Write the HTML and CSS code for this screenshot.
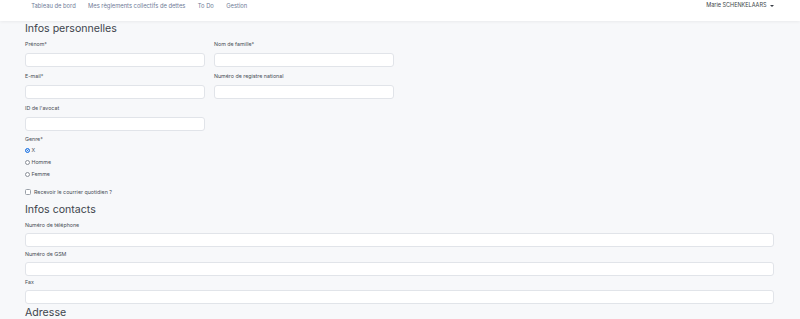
FILE: index.html
```html
<!DOCTYPE html>
<html lang="fr">
<head>
    <meta charset="UTF-8">
    <meta name="viewport" content="width=device-width, initial-scale=1.0">
    <title>Profil</title>
    <link rel="stylesheet" href="styles.css">
</head>
<body>
    <div class="navbar">
        <div class="nav-links">
            <a href="#">Tableau de bord</a>
            <a href="#">Mes règlements collectifs de dettes</a>
            <a href="#">To Do</a>
            <a href="#">Gestion</a>
        </div>
        <div class="user-menu">Marie SCHENKELAARS <span class="caret"></span></div>
    </div>

    <div class="content">
        <h2>Infos personnelles</h2>
        <div class="form-grid">
            <div class="field">
                <label>Prénom*</label>
                <input type="text">
            </div>
            <div class="field">
                <label>Nom de famille*</label>
                <input type="text">
            </div>
            <div class="field">
                <label>E-mail*</label>
                <input type="text">
            </div>
            <div class="field">
                <label>Numéro de registre national</label>
                <input type="text">
            </div>
            <div class="field">
                <label>ID de l'avocat</label>
                <input type="text">
            </div>
        </div>

        <div class="genre">
            <label>Genre*</label>
            <div class="radio"><input type="radio" name="genre" checked> X</div>
            <div class="radio"><input type="radio" name="genre"> Homme</div>
            <div class="radio"><input type="radio" name="genre"> Femme</div>
        </div>

        <div class="check">
            <input type="checkbox"> Recevoir le courrier quotidien ?
        </div>

        <h2>Infos contacts</h2>
        <div class="field wide first">
            <label>Numéro de téléphone</label>
            <input type="text">
        </div>
        <div class="field wide">
            <label>Numéro de GSM</label>
            <input type="text">
        </div>
        <div class="field wide">
            <label>Fax</label>
            <input type="text">
        </div>

        <h2 class="last">Adresse</h2>
    </div>
</body>
</html>
```

FILE: styles.css
```css
body {
    font-family: Inter, "Noto Sans", sans-serif;
    margin: 0;
    background-color: #f7f8fa;
    color: #484d55;
}

.navbar {
    display: flex;
    justify-content: space-between;
    height: 21px;
    background-color: #fff;
    box-shadow: 0 1px 3px rgba(0, 0, 0, 0.06);
    padding: 0 25px;
}

.nav-links {
    display: flex;
    height: 11px;
    align-items: center;
}

.nav-links a {
    font-size: 5.8px;
    color: #6f7b97;
    text-decoration: none;
    padding: 0 6.2px;
}

.user-menu {
    font-size: 5.5px;
    color: #3a3f47;
    height: 10px;
    line-height: 10px;
    padding-right: 1px;
}

.caret {
    display: inline-block;
    width: 0;
    height: 0;
    border-left: 2px solid transparent;
    border-right: 2px solid transparent;
    border-top: 2px solid #3a3f47;
    vertical-align: middle;
    margin-left: 2px;
}

.content {
    padding: 0 26px 0 25px;
}

h2 {
    font-size: 10.6px;
    font-weight: 400;
    line-height: 14px;
    margin: 1px 0 4px;
    color: #40454d;
}

.form-grid {
    display: grid;
    grid-template-columns: 180px 180px;
    column-gap: 9px;
    row-gap: 5px;
}

.field label {
    display: block;
    font-size: 5.3px;
    line-height: 9px;
    margin-bottom: 4px;
}

.field input {
    display: block;
    box-sizing: border-box;
    width: 100%;
    height: 14px;
    margin: 0;
    border: 1px solid #e1e4e9;
    border-radius: 3px;
    background-color: #fff;
}

.genre {
    margin-top: 4px;
    font-size: 5.3px;
}

.genre label {
    display: block;
    line-height: 9px;
}

.radio {
    display: flex;
    align-items: center;
    height: 12px;
    gap: 1.5px;
}

.radio input {
    appearance: none;
    width: 5px;
    height: 5px;
    margin: 0;
    border: 0.6px solid #8a8f98;
    border-radius: 50%;
    background-color: #fff;
}

.radio input:checked {
    border-color: #2a7be4;
    background-color: #2a7be4;
    box-shadow: inset 0 0 0 0.8px #fff;
}

.check {
    display: flex;
    align-items: center;
    gap: 3px;
    height: 12px;
    margin-top: 6px;
    font-size: 5.3px;
}

.check input {
    appearance: none;
    width: 6px;
    height: 6px;
    margin: 0;
    border: 0.6px solid #9aa0a8;
    border-radius: 1.5px;
    background-color: #fff;
}

.check + h2 {
    margin-top: 5px;
}

.field.wide label {
    margin-top: 2.5px;
    margin-bottom: 3px;
}

.field.wide.first label {
    margin-top: 0;
}

.last {
    margin-top: 2px;
}
```
